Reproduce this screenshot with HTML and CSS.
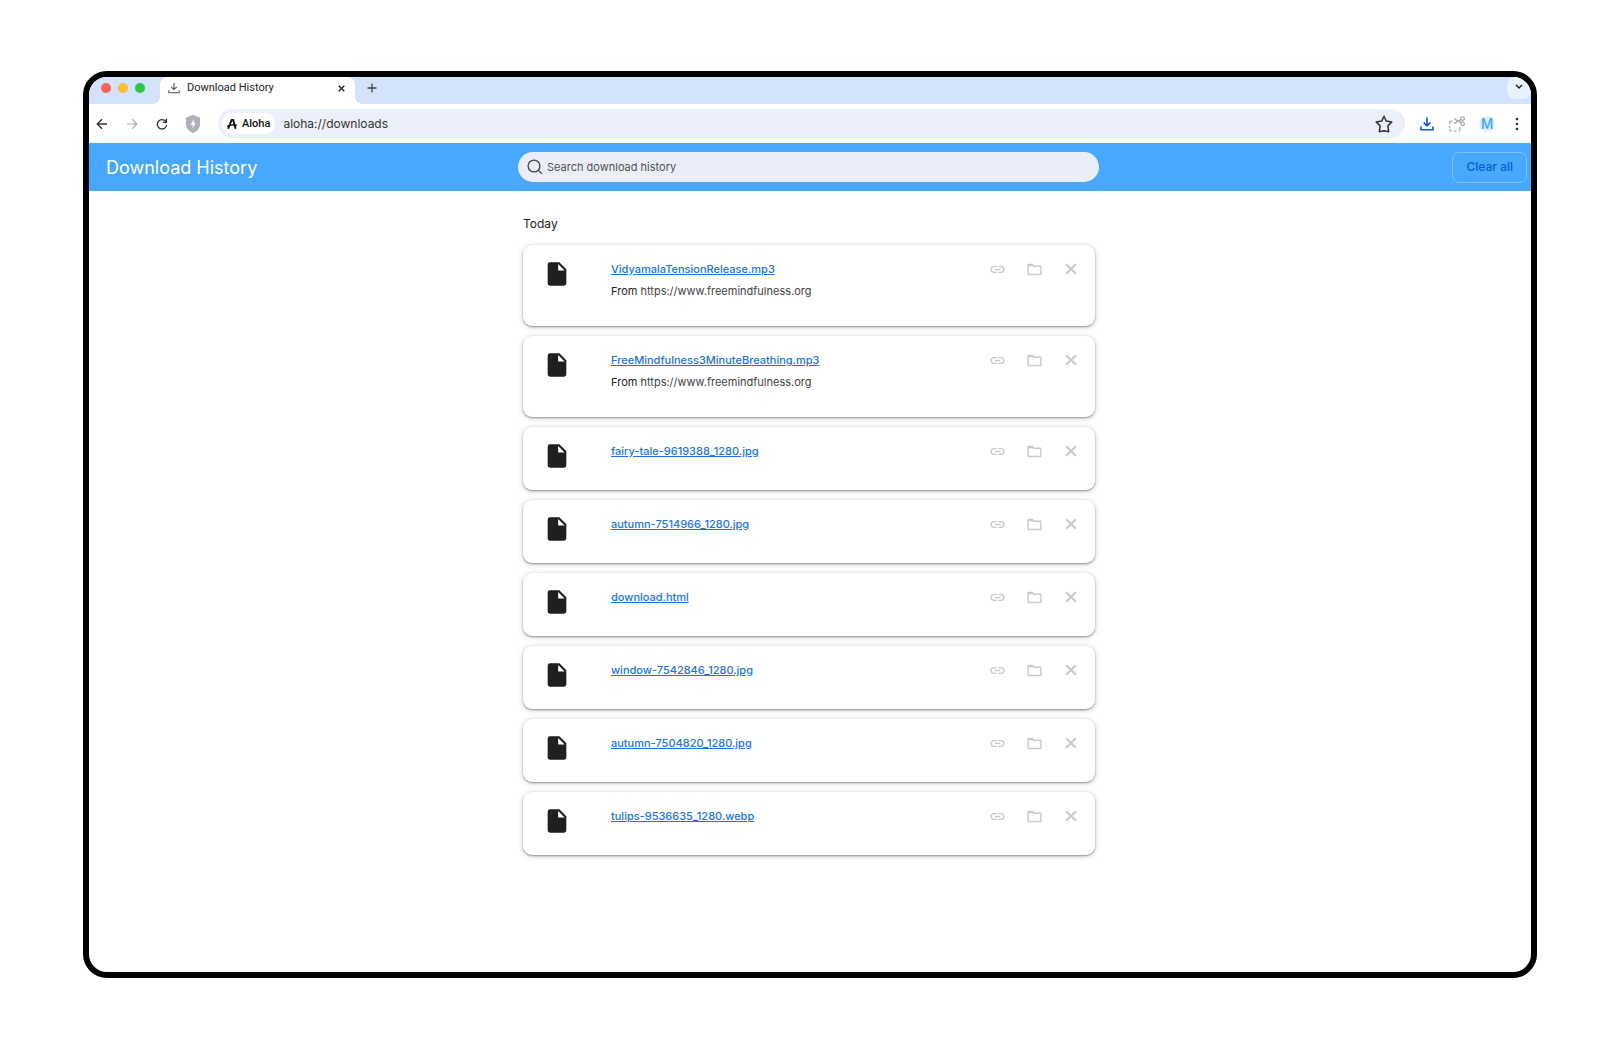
FILE: index.html
```html
<!DOCTYPE html>
<html lang="en">
<head>
<meta charset="utf-8">
<title>Download History</title>
<link rel="stylesheet" href="styles.css">
</head>
<body>
<svg class="sprite" aria-hidden="true">
  <symbol id="i-file" viewBox="0 0 24 24"><path d="M6 2a2 2 0 0 0-2 2v16a2 2 0 0 0 2 2h12a2 2 0 0 0 2-2V8l-6-6H6zm7 7V3.500L18.500 9H13z" fill="currentColor"/></symbol>
  <symbol id="i-link" viewBox="0 0 24 24"><path d="M3.900 12c0-1.710 1.390-3.100 3.100-3.100h4V7H7a5 5 0 0 0 0 10h4v-1.900H7c-1.710 0-3.100-1.390-3.100-3.100zM8 13h8v-2H8v2zm9-6h-4v1.900h4a3.100 3.100 0 0 1 0 6.200h-4V17h4a5 5 0 0 0 0-10z" fill="currentColor"/></symbol>
  <symbol id="i-folder" viewBox="0 0 24 24"><path d="M3 19V5h6.500l1.500 2.500h10V19z" fill="none" stroke="currentColor" stroke-width="2" stroke-linejoin="round"/><path d="M3 5h6.500l1.500 2.500H3z" fill="currentColor"/></symbol>
  <symbol id="i-close" viewBox="0 0 12 12"><path d="M1.200 1.200l9.600 9.600M10.800 1.200l-9.600 9.600" stroke="currentColor" stroke-width="2.300" fill="none"/></symbol>
  <symbol id="i-save" viewBox="0 0 14 14"><path d="M7 1v7.500M3.800 5.600L7 8.800l3.200-3.200M1 9.500v3h12v-3" stroke="currentColor" stroke-width="1.300" fill="none"/></symbol>
</svg>

<main class="window">
  <div class="tabstrip">
    <div class="lights"><span class="light red"></span><span class="light amber"></span><span class="light green"></span></div>
    <div class="tab">
      <svg class="tab-icon"><use href="#i-save"/></svg>
      <span class="tab-title">Download History</span>
      <button class="bare" aria-label="Close tab"><svg class="tab-close"><use href="#i-close"/></svg></button>
    </div>
    <button class="bare new-tab" aria-label="New tab"><svg width="10" height="10" viewBox="0 0 10 10"><path d="M5 .5v9M.5 5h9" stroke="currentColor" stroke-width="1.300"/></svg></button>
    <button class="bare tab-list" aria-label="List tabs"><svg width="8" height="6" viewBox="0 0 8 6"><path d="M1 1l3 3 3-3" stroke="currentColor" stroke-width="1.500" fill="none"/></svg></button>
  </div>

  <div class="toolbar">
    <div class="nav">
      <button class="bare" aria-label="Back"><svg width="12" height="12" viewBox="0 0 12 12"><path d="M11 6H1.500M6 1.200L1.200 6 6 10.800" stroke="currentColor" stroke-width="1.300" fill="none"/></svg></button>
      <button class="bare dim" aria-label="Forward"><svg width="12" height="12" viewBox="0 0 12 12"><path d="M1 6h9.500M6 1.200L10.800 6 6 10.800" stroke="currentColor" stroke-width="1.200" fill="none"/></svg></button>
      <button class="bare" aria-label="Reload"><svg width="12" height="12" viewBox="0 0 12 12"><path d="M9.900 3.600A4.700 4.700 0 1 0 10.700 7" stroke="currentColor" stroke-width="1.300" fill="none"/><path d="M10.400.8v3.600H6.800" stroke="currentColor" stroke-width="1.300" fill="none"/></svg></button>
      <button class="bare" aria-label="Shield"><svg width="14" height="18" viewBox="0 0 14 18"><path d="M7 0l7 2.600V9c0 4-2.800 7.500-7 9-4.200-1.500-7-5-7-9V2.600z" fill="#b0b0ba"/><path d="M8.200 4L4.600 9.700h2.200L6.300 13.600l3.500-5.700H7.800z" fill="#fff"/></svg></button>
    </div>
    <div class="address">
      <span class="chip"><svg width="10" height="10" viewBox="0 0 10 10"><path d="M1.200 9.800L4.600 1H6.200L8.600 9.800" stroke="currentColor" stroke-width="1.900" fill="none"/><path d="M0 7.600Q4 4.800 10 6.400" stroke="currentColor" stroke-width="1.400" fill="none"/></svg>Aloha</span>
      <input class="url" type="text" value="aloha://downloads" aria-label="Address">
      <button class="bare" aria-label="Bookmark"><svg width="18" height="18" viewBox="0 0 18 18"><path d="M9 1.200l2.300 4.900 5.500.8-3.900 3.900.8 5.900L9 15.700l-4.700 1 .8-5.900L1.200 6.900l5.500-.8z" stroke="currentColor" stroke-width="1.500" stroke-linejoin="round" fill="none"/></svg></button>
    </div>
    <div class="tools">
      <button class="bare blue" aria-label="Downloads"><svg width="16" height="14" viewBox="0 0 16 14"><path d="M8 .5v8M4.600 5.500L8 8.900l3.400-3.400M2 9.500v3.300h12V9.500" stroke="currentColor" stroke-width="1.600" fill="none"/></svg></button>
      <button class="bare faded" aria-label="Capture"><svg width="16" height="16" viewBox="0 0 16 16" fill="none" stroke="currentColor" stroke-width="1.300"><circle cx="13.600" cy="2.600" r="1.800"/><circle cx="13.600" cy="7.800" r="1.800"/><path d="M12 3.600L5 7.600M12 6.800L5 2.600M3.600 5.200H2.600Q.6 5.200.6 7.200V8M.6 10v2M.6 13q0 2 2 2M5 15.200h2.500M9.500 15.200q1.500-.2 1.500-2V11"/></svg></button>
      <button class="bare avatar" aria-label="Profile">M</button>
      <button class="bare" aria-label="Menu"><svg width="4" height="14" viewBox="0 0 4 14" fill="currentColor"><circle cx="2" cy="2" r="1.300"/><circle cx="2" cy="7" r="1.300"/><circle cx="2" cy="12" r="1.300"/></svg></button>
    </div>
  </div>

  <header class="header">
    <h1 class="title">Download History</h1>
    <label class="search">
      <svg width="16" height="16" viewBox="0 0 16 16"><circle cx="7" cy="7" r="5.900" stroke="currentColor" stroke-width="1.300" fill="none"/><path d="M11.300 11.300l3.600 3.600" stroke="currentColor" stroke-width="1.300"/></svg>
      <input type="search" placeholder="Search download history" aria-label="Search download history">
    </label>
    <button class="clear">Clear all</button>
  </header>

  <section class="content">
    <h2 class="day">Today</h2>
    <ul class="list">
      <li class="card tall"><svg class="file"><use href="#i-file"/></svg><div class="info"><a href="#">VidyamalaTensionRelease.mp3</a><p class="source">From <span>https://www.freemindfulness.org</span></p></div><div class="actions"><button class="bare" aria-label="Copy link"><svg><use href="#i-link"/></svg></button><button class="bare" aria-label="Show in folder"><svg><use href="#i-folder"/></svg></button><button class="bare" aria-label="Remove"><svg class="x"><use href="#i-close"/></svg></button></div></li>
      <li class="card tall"><svg class="file"><use href="#i-file"/></svg><div class="info"><a href="#">FreeMindfulness3MinuteBreathing.mp3</a><p class="source">From <span>https://www.freemindfulness.org</span></p></div><div class="actions"><button class="bare" aria-label="Copy link"><svg><use href="#i-link"/></svg></button><button class="bare" aria-label="Show in folder"><svg><use href="#i-folder"/></svg></button><button class="bare" aria-label="Remove"><svg class="x"><use href="#i-close"/></svg></button></div></li>
      <li class="card"><svg class="file"><use href="#i-file"/></svg><div class="info"><a href="#">fairy-tale-9619388_1280.jpg</a></div><div class="actions"><button class="bare" aria-label="Copy link"><svg><use href="#i-link"/></svg></button><button class="bare" aria-label="Show in folder"><svg><use href="#i-folder"/></svg></button><button class="bare" aria-label="Remove"><svg class="x"><use href="#i-close"/></svg></button></div></li>
      <li class="card"><svg class="file"><use href="#i-file"/></svg><div class="info"><a href="#">autumn-7514966_1280.jpg</a></div><div class="actions"><button class="bare" aria-label="Copy link"><svg><use href="#i-link"/></svg></button><button class="bare" aria-label="Show in folder"><svg><use href="#i-folder"/></svg></button><button class="bare" aria-label="Remove"><svg class="x"><use href="#i-close"/></svg></button></div></li>
      <li class="card"><svg class="file"><use href="#i-file"/></svg><div class="info"><a href="#">download.html</a></div><div class="actions"><button class="bare" aria-label="Copy link"><svg><use href="#i-link"/></svg></button><button class="bare" aria-label="Show in folder"><svg><use href="#i-folder"/></svg></button><button class="bare" aria-label="Remove"><svg class="x"><use href="#i-close"/></svg></button></div></li>
      <li class="card"><svg class="file"><use href="#i-file"/></svg><div class="info"><a href="#">window-7542846_1280.jpg</a></div><div class="actions"><button class="bare" aria-label="Copy link"><svg><use href="#i-link"/></svg></button><button class="bare" aria-label="Show in folder"><svg><use href="#i-folder"/></svg></button><button class="bare" aria-label="Remove"><svg class="x"><use href="#i-close"/></svg></button></div></li>
      <li class="card"><svg class="file"><use href="#i-file"/></svg><div class="info"><a href="#">autumn-7504820_1280.jpg</a></div><div class="actions"><button class="bare" aria-label="Copy link"><svg><use href="#i-link"/></svg></button><button class="bare" aria-label="Show in folder"><svg><use href="#i-folder"/></svg></button><button class="bare" aria-label="Remove"><svg class="x"><use href="#i-close"/></svg></button></div></li>
      <li class="card"><svg class="file"><use href="#i-file"/></svg><div class="info"><a href="#">tulips-9536635_1280.webp</a></div><div class="actions"><button class="bare" aria-label="Copy link"><svg><use href="#i-link"/></svg></button><button class="bare" aria-label="Show in folder"><svg><use href="#i-folder"/></svg></button><button class="bare" aria-label="Remove"><svg class="x"><use href="#i-close"/></svg></button></div></li>
    </ul>
  </section>
</main>
</body>
</html>
```
FILE: styles.css
```css
* { box-sizing: border-box; }

body {
  margin: 0;
  min-height: 100vh;
  display: flex;
  padding: 71px 84px 70px 83px;
  background: #fff;
  color: #222;
  font: 11px/16px Inter, "Liberation Sans", sans-serif;
}

.sprite { position: absolute; width: 0; height: 0; }
svg { display: block; flex: none; }

.bare {
  display: flex;
  align-items: center;
  justify-content: center;
  padding: 0;
  border: 0;
  background: none;
  color: inherit;
  font: inherit;
}

.window {
  flex: 1;
  min-width: 0;
  border: 6px solid #000;
  border-radius: 24px;
  overflow: hidden;
}

/* Tab strip */
.tabstrip {
  display: flex;
  height: 27px;
  background: #d3e2fd;
}
.lights { display: flex; gap: 7px; padding: 6px 15px 0 12px; }
.light { width: 10px; height: 10px; border-radius: 50%; }
.red { background: #fe5f57; }
.amber { background: #febc2e; }
.green { background: #28c840; }

.tab {
  position: relative;
  display: flex;
  align-items: center;
  width: 195px;
  padding: 0 10px 5px 8px;
  background: #fff;
  border-radius: 8px 8px 0 0;
}
.tab::before,
.tab::after {
  content: "";
  position: absolute;
  bottom: 0;
  width: 8px;
  height: 8px;
}
.tab::before { right: 100%; background: radial-gradient(circle at 0 0, #d3e2fd 8px, #fff 8px); }
.tab::after { left: 100%; background: radial-gradient(circle at 100% 0, #d3e2fd 8px, #fff 8px); }
.tab-icon { width: 12px; height: 12px; color: #555; }
.tab-title { flex: 1; padding-left: 7px; font-family: Roboto, sans-serif; }
.tab-close { width: 7px; height: 7px; }
.new-tab { width: 34px; padding-bottom: 6px; color: #444; }
.tab-list {
  width: 24px;
  height: 22px;
  margin-left: auto;
  padding-bottom: 2px;
  border-radius: 8px;
  background: #eaf1fe;
}

/* Toolbar */
.toolbar {
  display: flex;
  align-items: center;
  height: 39px;
  padding: 0 6px 0 7px;
  color: #333;
}
.nav { display: flex; align-items: center; gap: 18px; width: 122px; }
.dim { color: #aaa; }
.address {
  flex: 1;
  display: flex;
  align-items: center;
  height: 29px;
  padding: 0 12px 0 4px;
  border-radius: 15px;
  background: #ebf0fa;
}
.chip {
  display: flex;
  align-items: center;
  gap: 5px;
  height: 21px;
  padding: 0 5px;
  border-radius: 11px;
  background: #fff;
  color: #111;
  font: 500 11px/16px Roboto, sans-serif;
}
.url {
  flex: 1;
  min-width: 0;
  padding: 0 0 0 8px;
  border: 0;
  background: none;
  color: #333;
  font: 12px/16px Inter, sans-serif;
}
.tools { display: flex; align-items: center; gap: 14px; padding-left: 14px; }
.tools .bare { width: 16px; height: 16px; }
.blue { color: #0b57d0; }
.faded { color: #aaa; }
.avatar {
  border-radius: 50%;
  background: #dff0ff;
  color: #46a8ff;
  font: 500 14px/16px Roboto, sans-serif;
}

/* Page header */
.header {
  display: grid;
  grid-template-columns: 1fr minmax(0, 581px) 1fr;
  align-items: center;
  height: 48px;
  padding-right: 3px;
  background: #46a8ff;
}
.title {
  margin: 0;
  padding: 1px 0 0 17px;
  color: #fff;
  font-size: 18px;
  font-weight: 400;
  line-height: 25px;
}
.search {
  display: flex;
  align-items: center;
  gap: 4px;
  height: 30px;
  padding: 0 9px;
  border-radius: 15px;
  background: #ebeef8;
  color: #444;
}
.search input {
  flex: 1;
  min-width: 0;
  padding: 0;
  border: 0;
  background: none;
  font: inherit;
}
.search input::placeholder { color: #505050; opacity: 1; }
.clear {
  justify-self: end;
  height: 31px;
  margin-right: 1px;
  padding: 0 13px;
  border: 1px solid #7fbffc;
  border-radius: 7px;
  background: none;
  color: #0b5cd5;
  font: 500 12px/16px Inter, sans-serif;
}

/* Download list */
.content {
  width: 100%;
  max-width: 574px;
  margin: 0 auto;
  padding: 25px 2px 0 0;
}
.day { margin: 0 0 13px; font-size: 12px; font-weight: 400; line-height: 16px; }
.list {
  display: flex;
  flex-direction: column;
  gap: 10px;
  margin: 0;
  padding: 0;
  list-style: none;
}
.card {
  display: flex;
  align-items: flex-start;
  min-height: 63px;
  padding: 15px 15px 0 20px;
  border-radius: 9px;
  background: #fff;
  box-shadow: 0 1px 2px rgba(0, 0, 0, .36), 0 1px 6px rgba(0, 0, 0, .18);
}
.card.tall { min-height: 81px; }
.file { width: 28px; height: 28px; color: #1f1f1f; }
.info { flex: 1; padding: 1px 0 0 40px; }
.info a {
  display: inline-block;
  color: #1a73e8;
  font-weight: 500;
  text-decoration: underline;
}
.source { margin: 6px 0 0; }
.source span { color: #444; }
.actions { display: flex; gap: 19px; color: #cacace; }
.actions .bare { width: 18px; height: 18px; }
.actions svg { width: 17px; height: 17px; }
.actions .x { width: 12px; height: 12px; }
```
